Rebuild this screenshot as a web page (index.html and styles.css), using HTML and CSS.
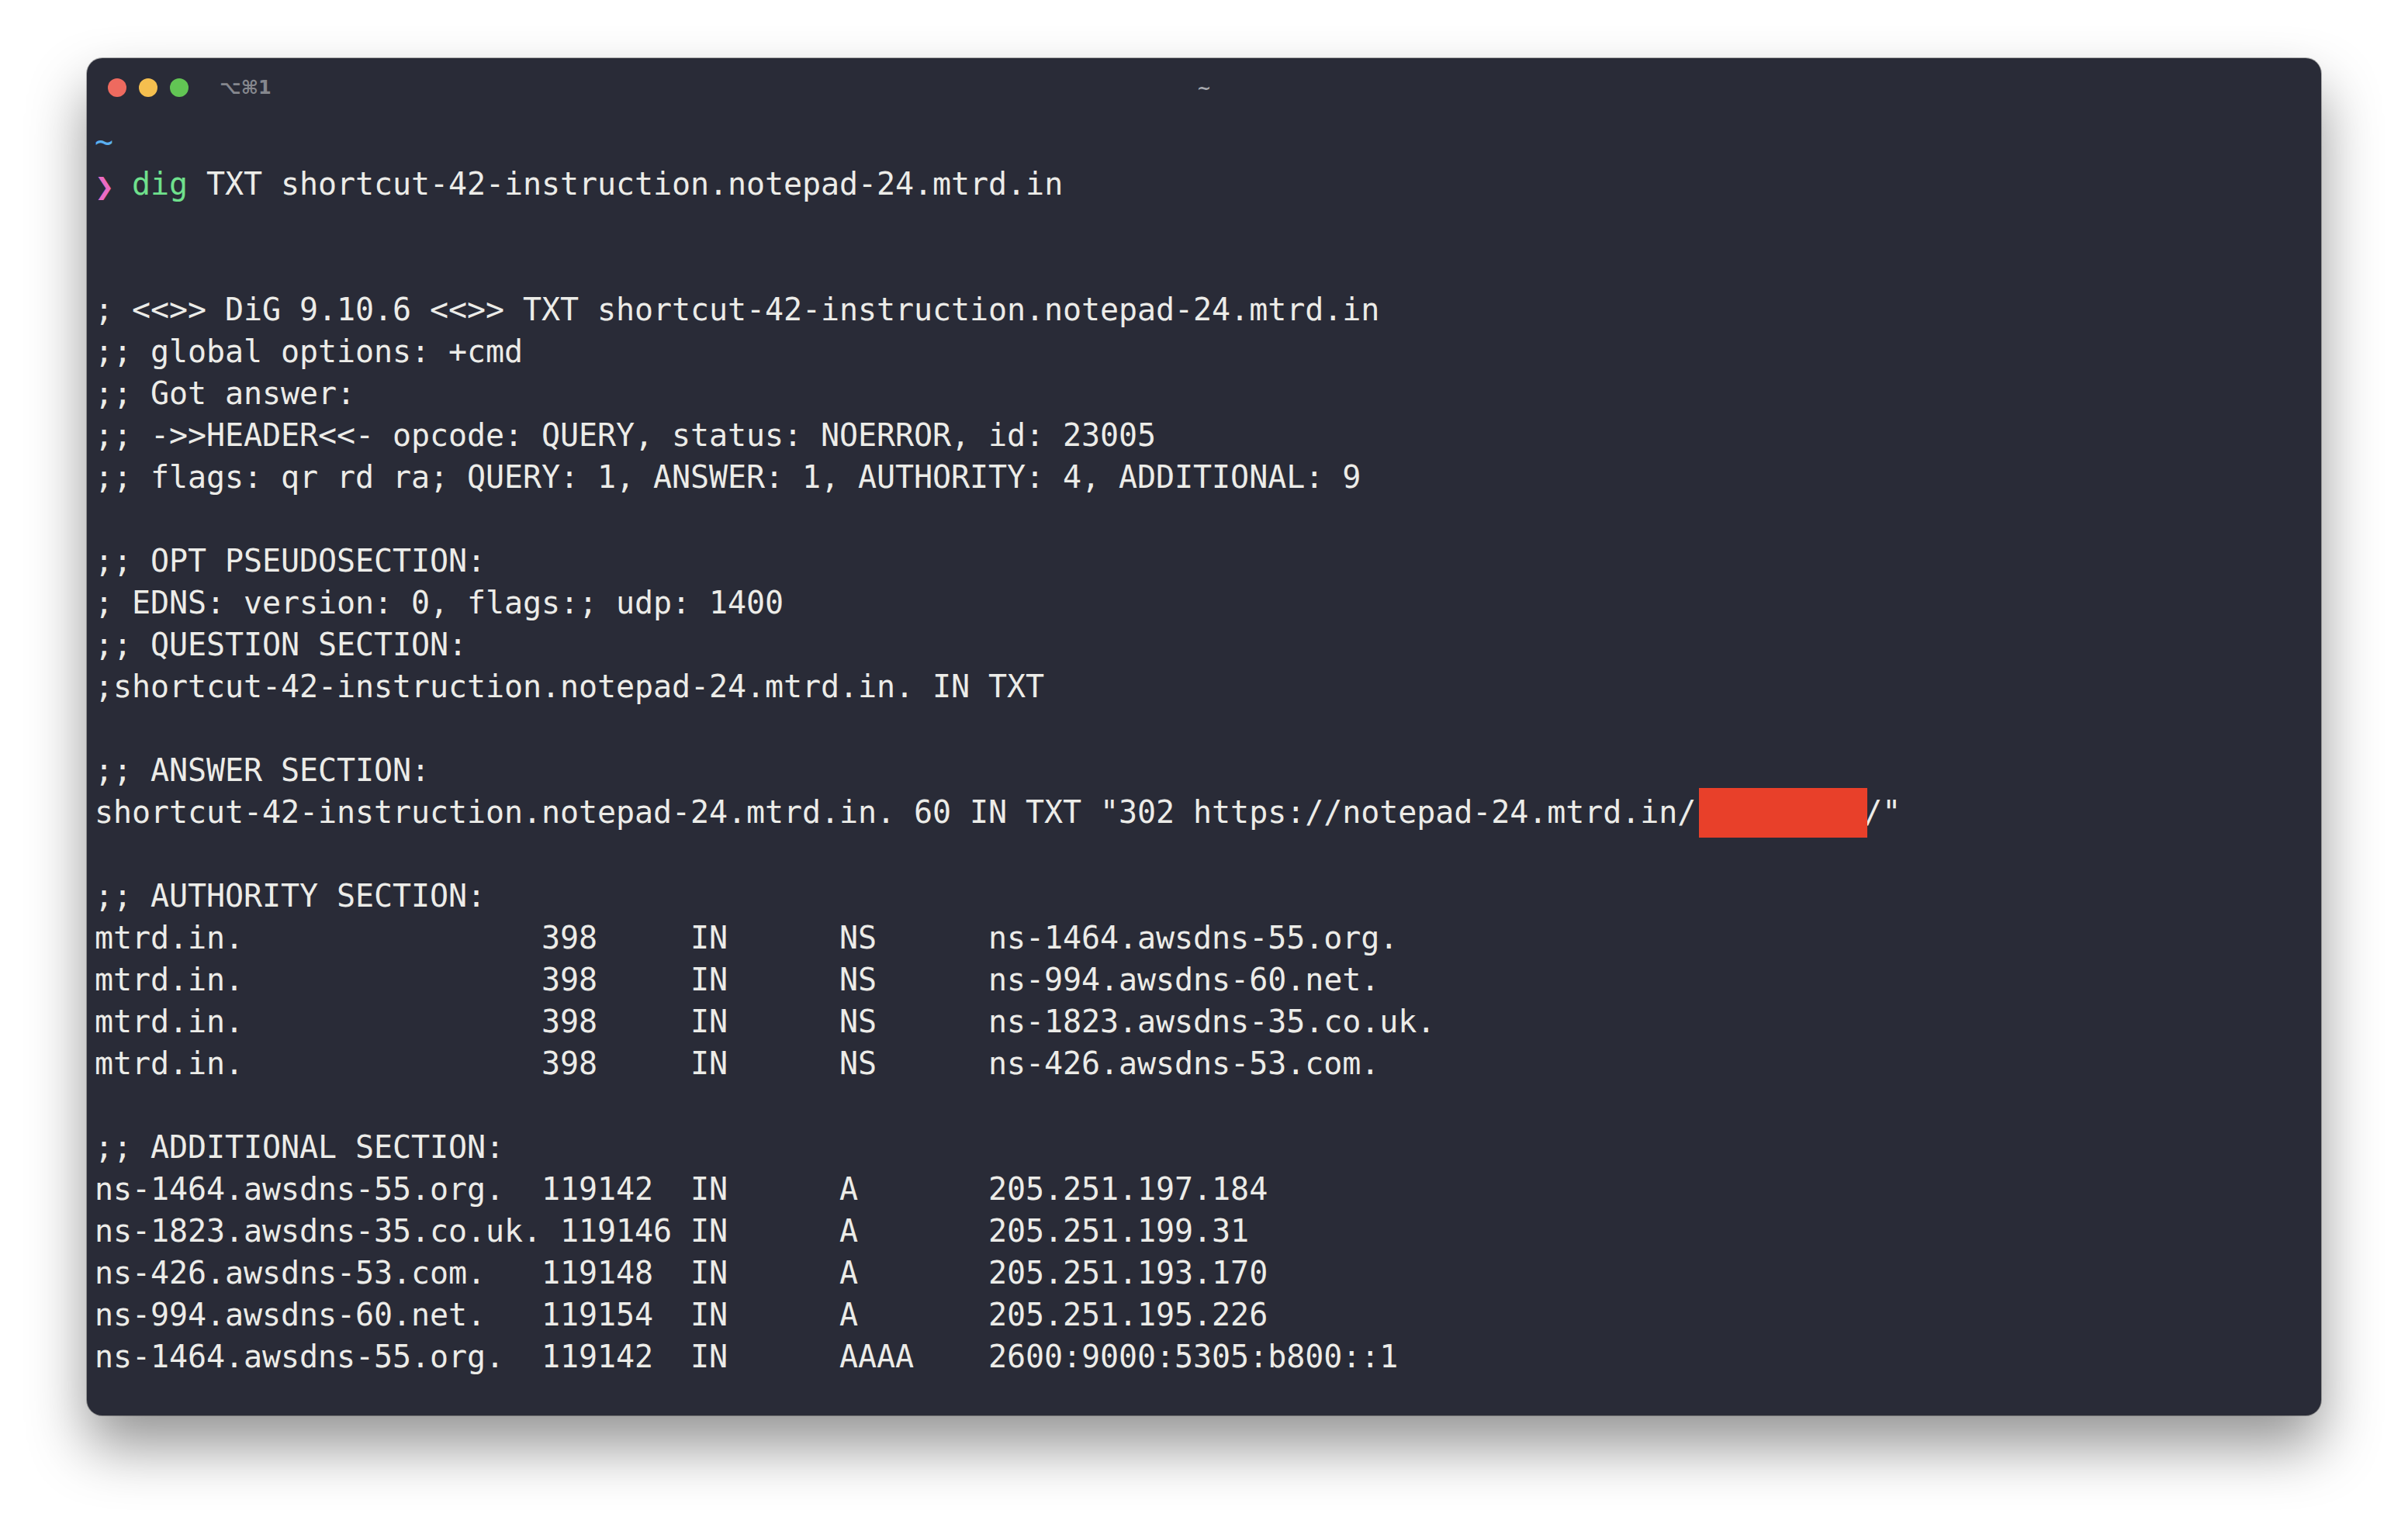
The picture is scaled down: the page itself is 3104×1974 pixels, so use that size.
FILE: index.html
```html
<!DOCTYPE html>
<html>
<head>
<meta charset="utf-8">
<link rel="stylesheet" href="styles.css">
</head>
<body>
<div class="window">
  <div class="titlebar">
    <div class="lights">
      <span class="light red"></span>
      <span class="light yellow"></span>
      <span class="light green"></span>
    </div>
    <span class="shortcut">⌥⌘1</span>
    <span class="title">~</span>
  </div>
  <div class="term">
    <div class="line"><span class="cwd">~</span></div>
    <div class="line"><span class="chev">❯</span><span class="sp"> </span><span class="cmd">dig</span><span> TXT shortcut-42-instruction.notepad-24.mtrd.in</span></div>
    <div class="line"> </div>
    <div class="line"> </div>
    <div class="line">; &lt;&lt;&gt;&gt; DiG 9.10.6 &lt;&lt;&gt;&gt; TXT shortcut-42-instruction.notepad-24.mtrd.in</div>
    <div class="line">;; global options: +cmd</div>
    <div class="line">;; Got answer:</div>
    <div class="line">;; -&gt;&gt;HEADER&lt;&lt;- opcode: QUERY, status: NOERROR, id: 23005</div>
    <div class="line">;; flags: qr rd ra; QUERY: 1, ANSWER: 1, AUTHORITY: 4, ADDITIONAL: 9</div>
    <div class="line"> </div>
    <div class="line">;; OPT PSEUDOSECTION:</div>
    <div class="line">; EDNS: version: 0, flags:; udp: 1400</div>
    <div class="line">;; QUESTION SECTION:</div>
    <div class="line">;shortcut-42-instruction.notepad-24.mtrd.in. IN TXT</div>
    <div class="line"> </div>
    <div class="line">;; ANSWER SECTION:</div>
    <div class="line"><span>shortcut-42-instruction.notepad-24.mtrd.in. 60 IN TXT "302 https://notepad-24.mtrd.in/</span><span class="redact">         </span><span>/"</span></div>
    <div class="line"> </div>
    <div class="line">;; AUTHORITY SECTION:</div>
    <div class="line">mtrd.in.                398     IN      NS      ns-1464.awsdns-55.org.</div>
    <div class="line">mtrd.in.                398     IN      NS      ns-994.awsdns-60.net.</div>
    <div class="line">mtrd.in.                398     IN      NS      ns-1823.awsdns-35.co.uk.</div>
    <div class="line">mtrd.in.                398     IN      NS      ns-426.awsdns-53.com.</div>
    <div class="line"> </div>
    <div class="line">;; ADDITIONAL SECTION:</div>
    <div class="line">ns-1464.awsdns-55.org.  119142  IN      A       205.251.197.184</div>
    <div class="line">ns-1823.awsdns-35.co.uk. 119146 IN      A       205.251.199.31</div>
    <div class="line">ns-426.awsdns-53.com.   119148  IN      A       205.251.193.170</div>
    <div class="line">ns-994.awsdns-60.net.   119154  IN      A       205.251.195.226</div>
    <div class="line">ns-1464.awsdns-55.org.  119142  IN      AAAA    2600:9000:5305:b800::1</div>
  </div>
</div>
</body>
</html>
```

FILE: styles.css
```css
html, body {
  margin: 0;
  padding: 0;
  background: #ffffff;
}

body {
  padding: 75px 0 0 112px;
  width: 3104px;
  height: 1974px;
  box-sizing: border-box;
  overflow: hidden;
}

.window {
  width: 2880px;
  height: 1750px;
  background: #292b37;
  border-radius: 20px;
  box-shadow: 0 0 0 1px rgba(0, 0, 0, 0.28), 0 40px 75px rgba(0, 0, 0, 0.42);
  display: flex;
  flex-direction: column;
  position: relative;
}

.titlebar {
  height: 76px;
  display: flex;
  align-items: center;
  padding-left: 27px;
  position: relative;
}

.lights {
  display: flex;
  gap: 16px;
}

.light {
  width: 24px;
  height: 24px;
  border-radius: 50%;
  display: block;
}

.red { background: #ee6a5f; }
.yellow { background: #f5bf4f; }
.green { background: #62c554; }

.shortcut {
  margin-left: 40px;
  font-family: "DejaVu Sans", sans-serif;
  font-weight: bold;
  font-size: 24px;
  color: #85878e;
  line-height: 1;
}

.title {
  position: absolute;
  left: 0;
  right: 0;
  top: 0;
  bottom: 0;
  display: flex;
  align-items: center;
  justify-content: center;
  font-family: "DejaVu Sans", sans-serif;
  font-weight: bold;
  font-size: 22px;
  color: #a8aab0;
  pointer-events: none;
}

.term {
  margin: 5px 0 0 10px;
  font-family: "DejaVu Sans Mono", monospace;
  font-size: 40px;
  letter-spacing: -0.08px;
  line-height: 54px;
  color: #ecece8;
}

.line {
  height: 54px;
  white-space: pre;
}

.cwd { color: #5ab0f0; }

.chev {
  display: inline-block;
  width: 24px;
  font-size: 30px;
  line-height: 30px;
  color: #ea6bc3;
  font-family: "DejaVu Sans", sans-serif;
  font-weight: bold;
}

.cmd { color: #6fe08c; }

.redact {
  position: relative;
}

.redact::after {
  content: "";
  position: absolute;
  left: 4px;
  right: -5px;
  top: -8px;
  bottom: -10px;
  background: #e8402a;
}
```
